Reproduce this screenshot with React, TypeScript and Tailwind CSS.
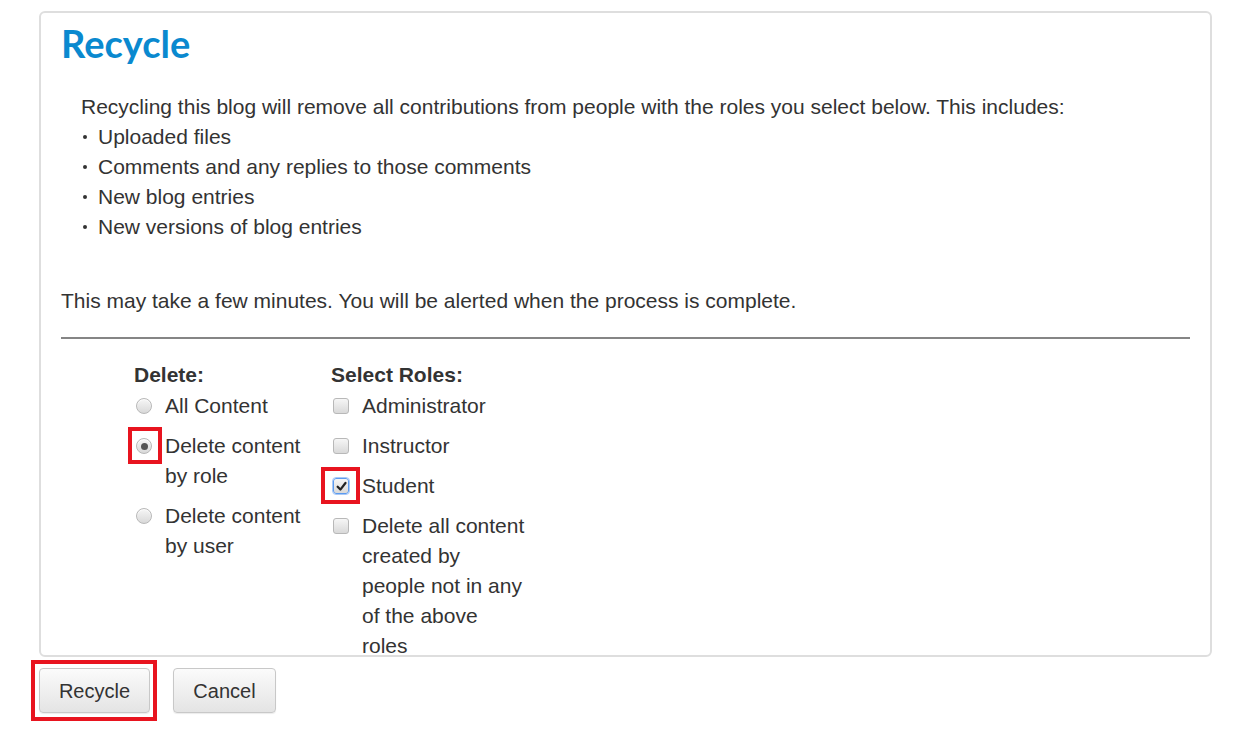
import React from "react";

function Radio({ checked }: { checked?: boolean }) {
  return (
    <span className="mt-[7px] flex h-[16px] w-[16px] shrink-0 items-center justify-center rounded-full border border-[#b8b8b8] bg-gradient-to-b from-[#f6f6f6] to-[#d9d9d9] shadow-[inset_0_1px_1px_rgba(255,255,255,0.8)]">
      {checked && <span className="h-[7px] w-[7px] rounded-full bg-[#555]" />}
    </span>
  );
}

function Checkbox({ checked }: { checked?: boolean }) {
  return (
    <span
      className={
        "mt-[7px] flex h-[16px] w-[16px] shrink-0 items-center justify-center rounded-[3px] border bg-gradient-to-b from-[#f6f6f6] to-[#d9d9d9] " +
        (checked ? "border-[#5b9bf0] outline outline-1 outline-[#a9c9f7]" : "border-[#b8b8b8]")
      }
    >
      {checked && (
        <svg width="11" height="11" viewBox="0 0 10 10">
          <path d="M1.5 5.2 L4 7.8 L8.6 1.8" fill="none" stroke="#222" strokeWidth="2" strokeLinecap="round" strokeLinejoin="round" />
        </svg>
      )}
    </span>
  );
}

export default function App() {
  const font = { fontFamily: '"Liberation Sans", Arial, sans-serif' };
  return (
    <div className="min-h-screen bg-white pl-[39px] pr-[22px] pt-[11px] text-[21px] leading-[30px] text-[#333]" style={font}>
      <div className="h-[646px] overflow-hidden rounded-[6px] border-2 border-[#dedede] px-[20px] pt-[8px]">
        <h1
          className="text-[38px] font-bold leading-[44px] text-[#0a89cf]"
          style={{ fontFamily: 'Lato, "Open Sans", sans-serif' }}
        >
          Recycle
        </h1>
        <p className="mt-[27px] pl-[20px]">
          Recycling this blog will remove all contributions from people with the roles you select below. This includes:
        </p>
        <ul className="pl-[22px]">
          {[
            "Uploaded files",
            "Comments and any replies to those comments",
            "New blog entries",
            "New versions of blog entries",
          ].map((t) => (
            <li key={t} className="flex items-center">
              <span className="mr-[11px] h-[4px] w-[4px] shrink-0 rounded-full bg-[#333]" />
              <span>{t}</span>
            </li>
          ))}
        </ul>
        <p className="mt-[44px]">This may take a few minutes. You will be alerted when the process is complete.</p>
        <hr className="mt-[21px] border-0 border-t-2 border-[#858585]" />
        <div className="mt-[21px] flex pl-[73px]">
          <div className="w-[197px]">
            <div className="font-bold">Delete:</div>
            <div className="mt-[1px] flex flex-col gap-[10px]">
              <label className="flex gap-[13px] pl-[2px]">
                <Radio />
                <span className="w-[145px]">All Content</span>
              </label>
              <label className="relative flex gap-[13px] pl-[2px]">
                <Radio checked />
                <span className="pointer-events-none absolute left-[-6px] top-[-4px] h-[37px] w-[34px] border-4 border-[#e8141f]" />
                <span className="w-[145px]">Delete content by role</span>
              </label>
              <label className="flex gap-[13px] pl-[2px]">
                <Radio />
                <span className="w-[145px]">Delete content by user</span>
              </label>
            </div>
          </div>
          <div className="w-[230px]">
            <div className="font-bold">Select Roles:</div>
            <div className="mt-[1px] flex flex-col gap-[10px]">
              {["Administrator", "Instructor"].map((t) => (
                <label key={t} className="flex gap-[13px] pl-[2px]">
                  <Checkbox />
                  <span className="w-[175px]">{t}</span>
                </label>
              ))}
              <label className="relative flex gap-[13px] pl-[2px]">
                <Checkbox checked />
                <span className="pointer-events-none absolute left-[-10px] top-[-4px] h-[37px] w-[39px] border-4 border-[#e8141f]" />
                <span className="w-[175px]">Student</span>
              </label>
              <label className="flex gap-[13px] pl-[2px]">
                <Checkbox />
                <span className="w-[175px] whitespace-nowrap">
                  Delete all content
                  <br />
                  created by
                  <br />
                  people not in any
                  <br />
                  of the above
                  <br />
                  roles
                </span>
              </label>
            </div>
          </div>
        </div>
      </div>
      <div className="mt-[11px] flex gap-[22px]">
        <div className="relative">
          <button className="h-[45px] w-[111px] rounded-[4px] border border-[#c8c8c8] bg-gradient-to-b from-[#fbfbfb] to-[#e4e4e4] text-[20px] text-[#333] shadow-[0_1px_1px_rgba(0,0,0,0.08)]">
            Recycle
          </button>
          <span className="pointer-events-none absolute left-[-8px] top-[-8px] h-[61px] w-[126px] border-4 border-[#e8141f]" />
        </div>
        <button className="ml-[1px] h-[45px] w-[103px] rounded-[4px] border border-[#c8c8c8] bg-gradient-to-b from-[#fbfbfb] to-[#e4e4e4] text-[20px] text-[#333] shadow-[0_1px_1px_rgba(0,0,0,0.08)]">
          Cancel
        </button>
      </div>
    </div>
  );
}
